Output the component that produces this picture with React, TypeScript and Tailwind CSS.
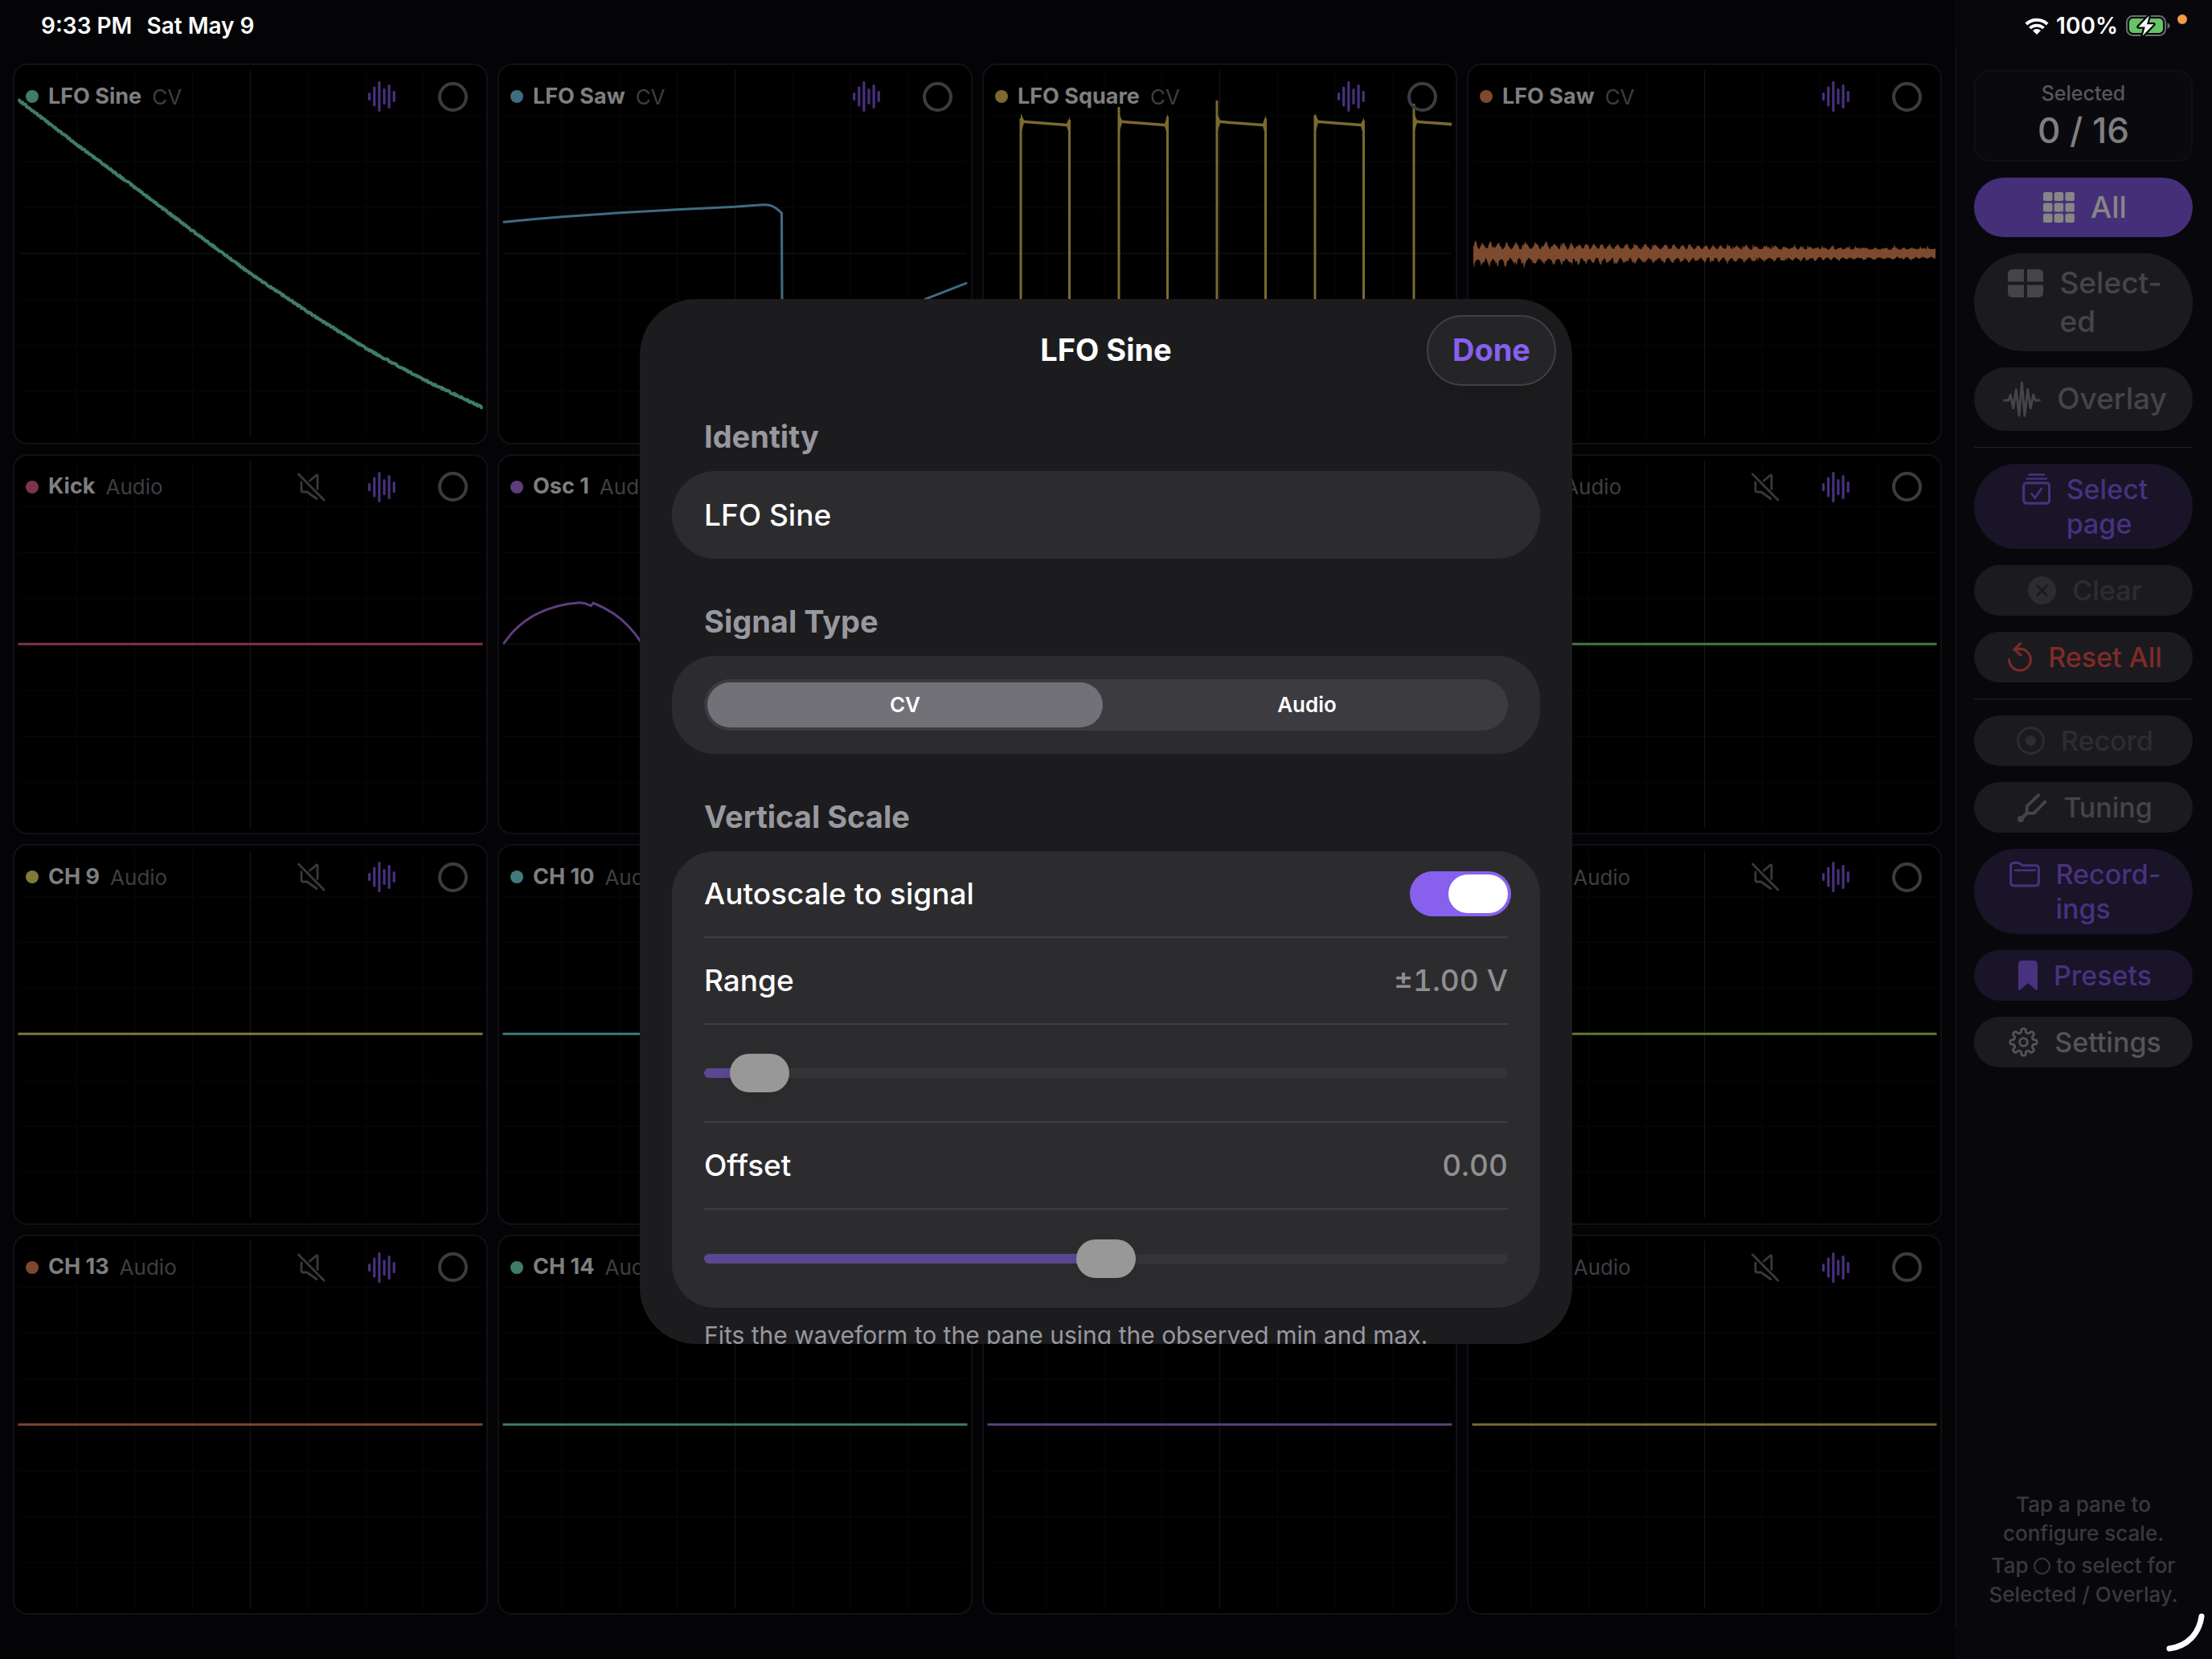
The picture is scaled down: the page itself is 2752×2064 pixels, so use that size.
import { useState } from 'react';
import type { ReactNode } from 'react';
import clsx from 'clsx';

type Channel = {
  name: string;
  kind: 'CV' | 'Audio';
  color: string;
  wave?: 'sine' | 'saw' | 'square' | 'noise' | 'osc';
};

const channels: Channel[] = [
  { name: 'LFO Sine', kind: 'CV', color: '#3f7d64', wave: 'sine' },
  { name: 'LFO Saw', kind: 'CV', color: '#3f6c80', wave: 'saw' },
  { name: 'LFO Square', kind: 'CV', color: '#7b6a2e', wave: 'square' },
  { name: 'LFO Saw', kind: 'CV', color: '#7d4a2d', wave: 'noise' },
  { name: 'Kick', kind: 'Audio', color: '#7d3449' },
  { name: 'Osc 1', kind: 'Audio', color: '#5f3d7d', wave: 'osc' },
  { name: 'CH 7', kind: 'Audio', color: '#7d5a3a' },
  { name: 'CH 8', kind: 'Audio', color: '#437a43' },
  { name: 'CH 9', kind: 'Audio', color: '#7d7a3c' },
  { name: 'CH 10', kind: 'Audio', color: '#3f7a7d' },
  { name: 'CH 11', kind: 'Audio', color: '#7d3f6b' },
  { name: 'CH 12', kind: 'Audio', color: '#5f7a2f' },
  { name: 'CH 13', kind: 'Audio', color: '#7d4630' },
  { name: 'CH 14', kind: 'Audio', color: '#3f7d64' },
  { name: 'CH 15', kind: 'Audio', color: '#5a4078' },
  { name: 'CH 16', kind: 'Audio', color: '#7b6a35' },
];

// Plot space shared by every pane
const W = 575;
const H = 457;
const MID = 228;

function random(seed: number) {
  let s = seed;
  return () => {
    s = (s * 1664525 + 1013904223) % 4294967296;
    return s / 4294967296;
  };
}

function sinePath() {
  const pts = [38, 93, 146, 200, 253, 301, 346, 385, 419];
  const rnd = random(7);
  const out: string[] = [];
  for (let x = 0; x <= W; x += 1) {
    const t = (x / W) * 8;
    const i = Math.min(7, Math.floor(t));
    const y = pts[i] + (pts[i + 1] - pts[i]) * (t - i);
    out.push(`${x} ${(y + (rnd() - 0.5) * 2).toFixed(1)}`);
  }
  return 'M' + out.join('L');
}

function noisePath() {
  const rnd = random(42);
  const top: string[] = [];
  const bottom: string[] = [];
  for (let x = 0; x <= W; x += 1) {
    const t = x / W;
    const lobe = 10.5 - 8.5 * t;
    const base = 4.6 - 0.8 * t;
    const phase = (x * Math.PI * 2) / 10.6 + 2 * Math.sin(x / 23);
    const up = base + lobe * (0.5 + 0.5 * Math.sin(phase)) * (0.5 + rnd() * 0.5) + rnd() * 2 + (rnd() > 0.96 ? 4 : 0);
    const down = base + lobe * (0.6 + 0.5 * Math.sin(phase + 1)) * (0.45 + rnd() * 0.6) + rnd() * 2 + (rnd() > 0.98 ? 4 : 0);
    top.push(`${x} ${(MID - up).toFixed(1)}`);
    bottom.unshift(`${x} ${(MID + down).toFixed(1)}`);
  }
  return 'M' + top.join('L') + 'L' + bottom.join('L') + 'Z';
}

const pulses = [
  { rise: 40, fall: 101, up: 60, end: 60 },
  { rise: 162, fall: 223, up: 46, end: 56 },
  { rise: 284, fall: 345, up: 38, end: 58 },
  { rise: 406, fall: 467, up: 56, end: 61 },
];

function Trace({ channel }: { channel: Channel }) {
  const { wave, color } = channel;
  if (wave === 'sine') {
    return <path d={sinePath()} fill="none" stroke={color} strokeWidth="4" strokeLinecap="round" strokeLinejoin="round" />;
  }
  if (wave === 'saw') {
    return (
      <path
        d="M0 189L36 185.500L72 182.500L144 177.500L215 173.500L287 170L315 168C330 166.500 336 168 345.500 178L346.500 400L420 350L525 284.500L575 265"
        fill="none"
        stroke={color}
        strokeWidth="3"
        strokeLinecap="round"
        strokeLinejoin="round"
      />
    );
  }
  if (wave === 'square') {
    return (
      <g fill={color}>
        {pulses.map((p) => (
          <g key={p.rise}>
            <rect x={p.rise - 1.5} y={p.up} width="3" height={H - 60 - p.up} />
            <path d={`M${p.rise} 54L${p.rise + 4} 62.500V66L${p.rise} 79Z`} />
            <path d={`M${p.rise + 2} 62.500L${p.fall - 1} 67V70.500L${p.rise + 2} 66Z`} />
            <path d={`M${p.fall} ${p.end - 2}L${p.fall - 4} 67V70L${p.fall - 1} 80Z`} />
            <rect x={p.fall - 2} y={p.end + 2} width="3" height={H - 60 - p.end} />
          </g>
        ))}
        {/* the last pulse runs out of the pane before it falls */}
        <rect x="527.500" y="42" width="3" height="355" />
        <path d="M529 54L533 62.500V66L529 79Z" />
        <path d="M531 62.500L576 65.800V69.300L531 66Z" />
      </g>
    );
  }
  if (wave === 'noise') {
    return <path d={noisePath()} fill={color} />;
  }
  if (wave === 'osc') {
    return (
      <path
        d="M0 227C10 213 16 207 27 199C48 184 72 178 94 176.500L101 177.500L108 180.500L111 177C128 184 142 192 154 205C160 211 165 217 170 225L230 290L300 228L400 170L575 290"
        fill="none"
        stroke={color}
        strokeWidth="3"
        strokeLinecap="round"
      />
    );
  }
  return <path d={`M0 ${MID}H${W}`} stroke={color} strokeWidth="3" strokeLinecap="square" />;
}

function Plot({ channel }: { channel: Channel }) {
  const steps = [1, 2, 3, 5, 6, 7];
  return (
    <svg
      viewBox={`0 0 ${W} ${H}`}
      preserveAspectRatio="none"
      className="absolute inset-1.5 h-[calc(100%-12px)] w-[calc(100%-12px)] overflow-visible"
      aria-hidden="true"
    >
      {steps.map((s) => (
        <path
          key={s}
          d={`M${(W / 8) * s} 0V${H}M0 ${(H / 8) * s}H${W}`}
          stroke="#08080a"
          strokeWidth="1"
        />
      ))}
      <path d={`M${W / 2} 0V${H}M0 ${MID}H${W}`} stroke="#15151c" strokeWidth="1" />
      <Trace channel={channel} />
    </svg>
  );
}

function WaveIcon() {
  const heights = [10, 25, 38, 20, 30, 14];
  return (
    <svg width="34" height="38" viewBox="0 0 34 38" fill="#48317f">
      {heights.map((h, i) => (
        <rect key={i} x={i * 6.13} y={19 - h / 2} width="3.200" height={h} rx="1.600" />
      ))}
    </svg>
  );
}

function MuteIcon() {
  return (
    <svg
      width="35"
      height="36"
      viewBox="0 0 35 36"
      fill="none"
      stroke="#39393d"
      strokeWidth="2.800"
      strokeLinecap="round"
      strokeLinejoin="round"
    >
      <path d="M1.500 2L33 34" />
      <path d="M5 12V22Q5 24 7 24H12L24 32.500" />
      <path d="M15.500 10L24 2.800L25 3.500V20.500" />
    </svg>
  );
}

function Pane({ channel }: { channel: Channel }) {
  return (
    <section className="relative rounded-[18px] border-2 border-[#101017] bg-black">
      <Plot channel={channel} />
      <header className="relative flex h-[78px] items-center pl-3.5 pr-[23px]">
        <span className="size-4 shrink-0 rounded-full" style={{ backgroundColor: channel.color }} />
        <h2 className="ml-3 text-[27px] font-bold text-[#7f7f80]">{channel.name}</h2>
        <span className="ml-[13px] text-[26px] text-[#3e3e42]">{channel.kind}</span>
        <div className="ml-auto flex items-center gap-[53px]">
          {channel.kind === 'Audio' && (
            <button type="button" aria-label={`Mute ${channel.name}`}>
              <MuteIcon />
            </button>
          )}
          <button type="button" aria-label={`Waveform of ${channel.name}`}>
            <WaveIcon />
          </button>
          <input
            type="checkbox"
            aria-label={`Select ${channel.name}`}
            className="size-[37px] appearance-none rounded-full border-4 border-[#3c3c40]"
          />
        </div>
      </header>
    </section>
  );
}

function gearPath() {
  const pts: string[] = [];
  for (let i = 0; i < 160; i += 1) {
    const a = (i / 160) * Math.PI * 2;
    const r = 14.4 + 2.3 * Math.tanh(2.6 * Math.cos(8 * a));
    pts.push(`${(18.5 + r * Math.cos(a)).toFixed(2)} ${(18.5 + r * Math.sin(a)).toFixed(2)}`);
  }
  return 'M' + pts.join('L') + 'Z';
}

const icons: Record<string, ReactNode> = {
  grid: (
    <svg width="39" height="38" viewBox="0 0 39 38" fill="currentColor">
      {[0, 1, 2].map((r) =>
        [0, 1, 2].map((c) => (
          <rect key={`${r}${c}`} x={c * 13.7} y={r * 13.4} width="11.500" height="11.100" rx="2.600" />
        ))
      )}
    </svg>
  ),
  split: (
    <svg width="44" height="35" viewBox="0 0 44 35" fill="currentColor">
      <path d="M6 0H20V15.400H0V6Q0 0 6 0Z" />
      <path d="M24 0H38Q44 0 44 6V15.400H24Z" />
      <path d="M0 19.600H20V35H6Q0 35 0 29Z" />
      <path d="M24 19.600H44V29Q44 35 38 35H24Z" />
    </svg>
  ),
  overlay: (
    <svg width="47" height="45" viewBox="0 0 47 45" fill="none" stroke="currentColor" strokeWidth="2.900" strokeLinecap="round" strokeLinejoin="round">
      <path d="M1.500 24H7L9.300 17L12.700 34L16.300 10.500L20 43L23.400 2L27 43L30.700 10.500L34.300 34L37.700 17L40 24H45.500" />
    </svg>
  ),
  stack: (
    <svg width="35" height="39" viewBox="0 0 35 39" fill="none" stroke="currentColor" strokeLinecap="round" strokeLinejoin="round">
      <path d="M8.500 1.500H27M5.500 6.600H30" strokeWidth="2.400" />
      <rect x="1.700" y="11.800" width="32" height="25.400" rx="3.600" strokeWidth="3.200" />
      <path d="M11.500 25L15.800 30.600L24 18.500" strokeWidth="2.600" />
    </svg>
  ),
  clear: (
    <svg width="35" height="35" viewBox="0 0 35 35">
      <circle cx="17.500" cy="17.500" r="17.500" fill="currentColor" />
      <path d="M11.800 11.800L23.200 23.200M23.200 11.800L11.800 23.200" stroke="#1b1b1f" strokeWidth="3" strokeLinecap="round" />
    </svg>
  ),
  reset: (
    <svg width="30" height="37" viewBox="0 0 30 37" fill="none" stroke="currentColor" strokeWidth="3" strokeLinecap="round" strokeLinejoin="round">
      <path d="M1.600 21.500A13.400 13.400 0 1 0 15 8.300L8 9" />
      <path d="M15.500 1.600L8 9L16 16.200" />
    </svg>
  ),
  record: (
    <svg width="35" height="35" viewBox="0 0 35 35">
      <circle cx="17.500" cy="17.500" r="16" fill="none" stroke="currentColor" strokeWidth="2.800" />
      <circle cx="17.500" cy="17.500" r="6.500" fill="currentColor" />
    </svg>
  ),
  tuning: (
    <svg width="37" height="36" viewBox="0 0 37 36" fill="none" stroke="currentColor" strokeWidth="3.800" strokeLinecap="round" strokeLinejoin="round">
      <path d="M26 2.300L11.700 16V24.800H20.500L34.300 10.400" />
      <path d="M12 24.500L4 32" strokeWidth="4.400" />
      <circle cx="4" cy="32" r="2" />
    </svg>
  ),
  folder: (
    <svg width="38" height="32" viewBox="0 0 38 32" fill="none" stroke="currentColor" strokeWidth="3" strokeLinejoin="round" strokeLinecap="round">
      <path d="M1.600 26V6Q1.600 1.600 6 1.600H10.500Q12.500 1.600 14 3L15 3.800Q16.200 4.800 18 4.800H32.500Q36.400 4.800 36.400 8.700V26Q36.400 29.900 32.500 29.900H5.500Q1.600 29.900 1.600 26Z" />
      <path d="M7 10.800H32" strokeWidth="2.400" />
    </svg>
  ),
  bookmark: (
    <svg width="24" height="37" viewBox="0 0 24 37" fill="currentColor">
      <path d="M4.500 0H19.500Q24 0 24 4.500V35Q24 38 21.500 36.300L12 28.300L2.500 36.300Q0 38 0 35V4.500Q0 0 4.500 0Z" />
    </svg>
  ),
  gear: (
    <svg width="37" height="37" viewBox="0 0 37 37" fill="none" stroke="currentColor" strokeWidth="2.800" strokeLinejoin="round">
      <path d={gearPath()} />
      <circle cx="18.500" cy="18.500" r="4.900" />
    </svg>
  ),
};

type SideButtonProps = {
  icon: string;
  lines: string[];
  tone: string;
  size?: 'lg' | 'sm';
  pad?: string;
  disabled?: boolean;
};

function SideButton({ icon, lines, tone, size = 'sm', pad, disabled }: SideButtonProps) {
  const large = size === 'lg';
  return (
    <button
      type="button"
      disabled={disabled}
      className={clsx(
        'flex w-full items-start justify-center gap-5 rounded-[61px] pl-1 text-left font-medium',
        large ? 'text-[37px] leading-[48px]' : 'text-[34px] leading-[43px]',
        pad ?? (large ? 'py-[13px]' : 'py-2.5'),
        tone
      )}
    >
      <span className={clsx('flex shrink-0 items-center', large ? 'h-12' : 'h-[43px]')}>{icons[icon]}</span>
      <span className="whitespace-pre">{lines.join('\n')}</span>
    </button>
  );
}

const gray = 'bg-[#1b1b1f] text-[#454549]';
const dim = 'bg-[#1b1b1f] text-[#2d2d31]';
const purple = 'bg-[#191428] text-[#48317f]';

function Sidebar() {
  return (
    <aside className="flex w-80 shrink-0 flex-col bg-[#08080c] pb-10 pt-[60px]">
      <div className="flex flex-1 flex-col gap-5 border-l-2 border-[#0f0f15] pb-[22px] pl-[22px] pr-6 pt-[27px]">
        <div className="flex flex-col items-center gap-1 rounded-[20px] border-2 border-[#0f0f14] bg-[#0a0a0e] pb-2.5 pt-[11px] font-medium">
          <span className="text-[25px] leading-8 text-[#57575a]">Selected</span>
          <span className="text-[44px] leading-[53px] text-[#7f7f81]">0 / 16</span>
        </div>
        <SideButton icon="grid" lines={['All']} tone="bg-[#452f78] text-[#868686]" size="lg" />
        <SideButton icon="split" lines={['Select-', 'ed']} tone={gray} size="lg" />
        <SideButton icon="overlay" lines={['Overlay']} tone={gray} size="lg" pad="pt-[15px] pb-4" />
        <hr className="border-[#222226]" />
        <SideButton icon="stack" lines={['Select', 'page']} tone={purple} />
        <SideButton icon="clear" lines={['Clear']} tone={dim} disabled />
        <SideButton icon="reset" lines={['Reset All']} tone="bg-[#1b1b1f] text-[#7f2b29]" />
        <hr className="border-[#222226]" />
        <SideButton icon="record" lines={['Record']} tone={dim} disabled />
        <SideButton icon="tuning" lines={['Tuning']} tone={gray} />
        <SideButton icon="folder" lines={['Record-', 'ings']} tone={purple} />
        <SideButton icon="bookmark" lines={['Presets']} tone={purple} />
        <SideButton icon="gear" lines={['Settings']} tone="bg-[#1b1b1f] text-[#545458]" />
        <div className="mt-auto flex flex-col gap-1 text-center text-[26px] font-medium leading-9 text-[#39393d]">
          <p>
            Tap a pane to
            <br />
            configure scale.
          </p>
          <p className="whitespace-nowrap">
            Tap{' '}
            <svg width="21" height="21" viewBox="0 0 21 21" className="inline-block align-[-2px]">
              <circle cx="10.500" cy="10.500" r="9.400" fill="none" stroke="currentColor" strokeWidth="2" />
            </svg>{' '}
            to select for
            <br />
            Selected / Overlay.
          </p>
        </div>
      </div>
    </aside>
  );
}

function StatusBar() {
  return (
    <div className="absolute inset-x-0 top-0 flex h-16 items-center pl-[51px] text-[28px] font-semibold text-white">
      <span>9:33 PM</span>
      <span className="ml-[18px]">Sat May 9</span>
      <div className="ml-auto flex items-center pr-[31px]">
        <svg width="30" height="21" viewBox="0 0 30 21" fill="none" stroke="#fff" strokeWidth="4">
          <path d="M1.800 8A19 19 0 0 1 28.200 8" />
          <path d="M6.500 13A12.200 12.200 0 0 1 23.500 13" strokeWidth="3.800" />
          <path d="M15 21L10 16A7.200 7.200 0 0 1 20 16Z" fill="#fff" stroke="none" />
        </svg>
        <span className="ml-[9px]">100%</span>
        <svg width="56" height="26" viewBox="0 0 56 26" className="ml-2.5">
          <rect x="1" y="1" width="48" height="24" rx="7.500" fill="none" stroke="#6c6c70" strokeWidth="2" />
          <rect x="4" y="4" width="42" height="18" rx="4.800" fill="#65c466" />
          <path d="M51.500 9.200Q54.600 10.400 54.600 13T51.500 16.800Z" fill="#6c6c70" />
          <path d="M28.800 0.500L15.500 14.400H23.800L20.600 25.500L34.500 11.300H26Z" fill="#fff" stroke="#08080c" strokeWidth="4.500" paintOrder="stroke" strokeLinejoin="round" />
        </svg>
        <span className="mb-4 ml-2 size-3 rounded-full bg-[#f49b46]" />
      </div>
    </div>
  );
}

function Card({ title, children }: { title: string; children: ReactNode }) {
  return (
    <section className="pb-[55px]">
      <h3 className="pb-5 pl-10 text-[38px] font-bold leading-[46px] text-[#98989f]">{title}</h3>
      <div className="overflow-hidden rounded-[54px] bg-[#2c2c2e] px-10">{children}</div>
    </section>
  );
}

function SliderRow({ label, value, onChange }: { label: string; value: number; onChange: (v: number) => void }) {
  // The thumb is 74px wide, so its centre never reaches the ends of the track
  const stop = `calc(37px + (100% - 74px) * ${value / 100})`;
  return (
    <div className="flex h-[122px] items-center">
      <input
        type="range"
        aria-label={label}
        min={0}
        max={100}
        step="any"
        value={value}
        onChange={(e) => onChange(Number(e.target.value))}
        style={{ background: `linear-gradient(to right, #5b478f ${stop}, #353537 ${stop})` }}
        className="h-3 w-full appearance-none rounded-full [&::-webkit-slider-thumb]:h-12 [&::-webkit-slider-thumb]:w-[74px] [&::-webkit-slider-thumb]:appearance-none [&::-webkit-slider-thumb]:rounded-full [&::-webkit-slider-thumb]:bg-[#989898] [&::-webkit-slider-thumb]:shadow-[0_4px_14px_rgba(0,0,0,0.08)]"
      />
    </div>
  );
}

function ChannelSheet() {
  const [name, setName] = useState('LFO Sine');
  const [signal, setSignal] = useState('CV');
  const [auto, setAuto] = useState(true);
  const [range, setRange] = useState(3.5);
  const [offset, setOffset] = useState(50);

  return (
    <div className="absolute inset-0 flex items-center justify-center pb-5">
      <div
        role="dialog"
        aria-label="LFO Sine"
        className="h-[63vh] w-full max-w-[1160px] overflow-hidden rounded-[70px] bg-[#1c1c1e] text-[37px] font-medium text-white"
      >
        <header className="grid h-32 grid-cols-[1fr_auto_1fr] items-center px-5">
          <h2 className="col-start-2 text-[38px] font-bold">LFO Sine</h2>
          <button
            type="button"
            className="h-[88px] justify-self-end rounded-full border-2 border-[#414143] bg-[#252527] px-[30px] text-[38px] font-bold text-[#8860ee] shadow-[0_16px_40px_rgba(0,0,0,0.08)]"
          >
            Done
          </button>
        </header>

        <div className="px-10 pt-5">
          <Card title="Identity">
            <input
              type="text"
              aria-label="Channel name"
              value={name}
              onChange={(e) => setName(e.target.value)}
              className="block h-[109px] w-full bg-transparent outline-none"
            />
          </Card>

          <Card title="Signal Type">
            <div className="py-[29px]">
              <div className="flex h-16 gap-2 rounded-full bg-[#3b3b40] p-1 text-[26px] font-semibold">
                {['CV', 'Audio'].map((option) => (
                  <label
                    key={option}
                    className={clsx(
                      'flex flex-1 items-center justify-center rounded-full',
                      signal === option && 'bg-[#727177]'
                    )}
                  >
                    <input
                      type="radio"
                      name="signal"
                      value={option}
                      checked={signal === option}
                      onChange={() => setSignal(option)}
                      className="sr-only"
                    />
                    {option}
                  </label>
                ))}
              </div>
            </div>
          </Card>

          <Card title="Vertical Scale">
            <div className="divide-y-2 divide-[#3e3e41]">
              <label className="flex h-[108px] items-center justify-between">
                Autoscale to signal
                <input
                  type="checkbox"
                  role="switch"
                  checked={auto}
                  onChange={(e) => setAuto(e.target.checked)}
                  className="-mr-1 flex h-14 w-[126px] appearance-none items-center rounded-full bg-[#3b3b40] p-1 before:h-12 before:w-[74px] before:rounded-full before:bg-white checked:justify-end checked:bg-[#8860ee]"
                />
              </label>
              <div className="flex h-[108px] items-center justify-between">
                <span>Range</span>
                <span className="tabular-nums text-[#8f8f91]">±1.00 V</span>
              </div>
              <SliderRow label="Range" value={range} onChange={setRange} />
              <div className="flex h-[108px] items-center justify-between">
                <span>Offset</span>
                <span className="tabular-nums text-[#8f8f91]">0.00</span>
              </div>
              <SliderRow label="Offset" value={offset} onChange={setOffset} />
            </div>
          </Card>
          <p className="-mt-[43px] pl-10 text-[30px] font-normal leading-[44px] text-[#98989f]">
            Fits the waveform to the pane using the observed min and max.
          </p>
        </div>
      </div>
    </div>
  );
}

export default function App() {
  return (
    <div className="relative flex h-screen min-h-[1700px] overflow-hidden bg-[#040406] font-[Inter,'Liberation_Sans',sans-serif]">
      <main className="grid flex-1 grid-cols-4 grid-rows-4 gap-3 px-4 pb-[55px] pt-[79px]">
        {channels.map((channel) => (
          <Pane key={channel.name + channel.color} channel={channel} />
        ))}
      </main>
      <Sidebar />
      <StatusBar />
      <ChannelSheet />
      <svg width="60" height="60" viewBox="0 0 60 60" fill="none" className="absolute bottom-1.5 right-1">
        <path d="M51 13C48 34 34 50 11 53" stroke="#fff" strokeWidth="7" strokeLinecap="round" />
      </svg>
    </div>
  );
}
